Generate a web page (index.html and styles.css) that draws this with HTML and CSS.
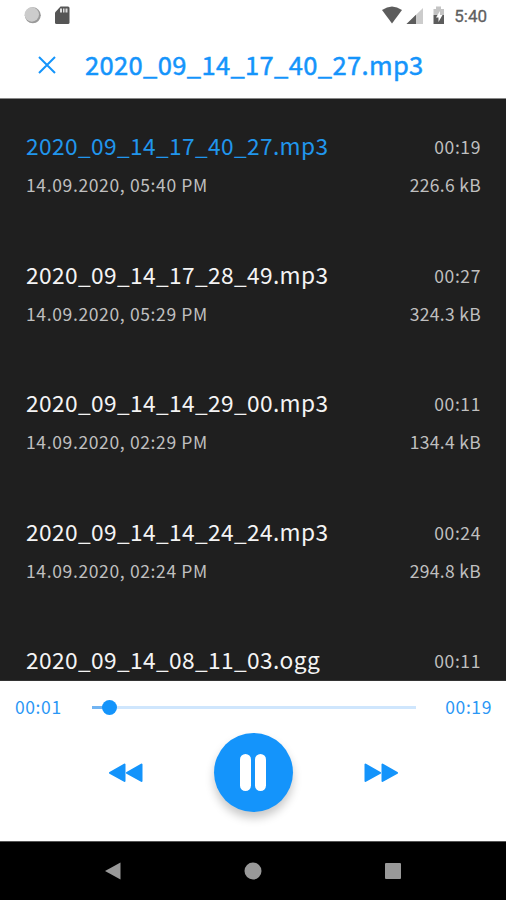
FILE: index.html
```html
<!DOCTYPE html>
<html lang="en">

<head>
    <meta charset="UTF-8" />
    <meta name="viewport" content="width=device-width, initial-scale=1.0" />
    <title>Recordings</title>
    <link rel="stylesheet" href="styles.css">
</head>

<body>
    <div class="phone">
        <div class="status">
            <svg class="status-left" width="50" height="20" viewBox="0 0 50 20">
                <circle cx="9.8" cy="9.3" r="8" fill="#999" />
                <circle cx="8.8" cy="8.5" r="7.2" fill="#ccc" />
                <path d="M32 6.5L37.5.5H45q1.5 0 1.5 1.5v14.5q0 1.5-1.5 1.5H33.5q-1.5 0-1.5-1.5z" fill="#555" />
                <path d="M37 2.5h2v4h-2zM40 2.5h1.5v4H40zM42.5 2.5h2v4h-2z" fill="#ddd" />
            </svg>
            <svg class="status-right" width="64" height="20" viewBox="0 0 64 20">
                <path d="M0 4Q10-3 20 4L10 17.5z" fill="#5c5c5c" />
                <path d="M41 2v16H24.5z" fill="#ccc" />
                <path d="M34 8.8V18h-9.5z" fill="#5c5c5c" />
                <path d="M51.5 3H54V.5h5V3h3v6H51.5z" fill="#c4c4c4" />
                <path d="M51.5 9H62v9H51.5z" fill="#5c5c5c" />
                <path d="M58 5l-4 6.5h2.5V16l4-7H58z" fill="#fff" />
            </svg>
            <span class="clock">5:40</span>
        </div>
        <div class="header">
            <svg class="close" width="18" height="18" viewBox="0 0 18 18">
                <path d="M1 1l16 16M17 1L1 17" stroke="#1494fb" stroke-width="2" />
            </svg>
            <span class="title">2020_09_14_17_40_27.mp3</span>
        </div>
        <div class="list">
            <div class="item active">
                <div class="row"><span class="name">2020_09_14_17_40_27.mp3</span><span class="info">00:19</span></div>
                <div class="row"><span class="info date">14.09.2020, 05:40 PM</span><span class="info size">226.6 kB</span></div>
            </div>
            <div class="item">
                <div class="row"><span class="name">2020_09_14_17_28_49.mp3</span><span class="info">00:27</span></div>
                <div class="row"><span class="info date">14.09.2020, 05:29 PM</span><span class="info size">324.3 kB</span></div>
            </div>
            <div class="item">
                <div class="row"><span class="name">2020_09_14_14_29_00.mp3</span><span class="info">00:11</span></div>
                <div class="row"><span class="info date">14.09.2020, 02:29 PM</span><span class="info size">134.4 kB</span></div>
            </div>
            <div class="item">
                <div class="row"><span class="name">2020_09_14_14_24_24.mp3</span><span class="info">00:24</span></div>
                <div class="row"><span class="info date">14.09.2020, 02:24 PM</span><span class="info size">294.8 kB</span></div>
            </div>
            <div class="item">
                <div class="row"><span class="name">2020_09_14_08_11_03.ogg</span><span class="info">00:11</span></div>
            </div>
        </div>
        <div class="player">
            <div class="progress">
                <span class="time">00:01</span>
                <div class="track">
                    <div class="played"></div>
                    <div class="thumb"></div>
                </div>
                <span class="time">00:19</span>
            </div>
            <div class="controls">
                <svg width="34" height="20" viewBox="0 0 34 20">
                    <path d="M1 9.8L15.5 1.5V18zM18 9.8L32.5 1.5V18z" fill="#1494fb" stroke="#1494fb" stroke-width="2" stroke-linejoin="round" />
                </svg>
                <div class="pause"><i></i><i></i></div>
                <svg width="34" height="20" viewBox="0 0 34 20">
                    <path d="M33 9.8L18.5 1.5V18zM16 9.8L1.5 1.5V18z" fill="#1494fb" stroke="#1494fb" stroke-width="2" stroke-linejoin="round" />
                </svg>
            </div>
        </div>
        <div class="nav">
            <svg width="16" height="18" viewBox="0 0 16 18"><path d="M0 9L15.5.5v17z" fill="#999" /></svg>
            <svg width="18" height="18" viewBox="0 0 18 18"><circle cx="9" cy="9" r="8.5" fill="#999" /></svg>
            <svg width="16" height="16" viewBox="0 0 16 16"><rect width="16" height="16" rx="1" fill="#999" /></svg>
        </div>
    </div>
</body>

</html>
```

FILE: styles.css
```css
* {
    margin: 0;
    padding: 0;
    box-sizing: border-box;
}

body {
    font-family: "Noto Sans CJK JP", "Noto Sans", sans-serif;
    font-kerning: none;
    background: #fff;
}

.phone {
    display: flex;
    flex-direction: column;
    width: 506px;
    height: 900px;
    overflow: hidden;
}

.status {
    display: flex;
    align-items: center;
    height: 32px;
    padding: 0 19px 0 23px;
}

.status-right {
    margin-left: auto;
}

.clock {
    margin-left: 8px;
    font: 400 17px Roboto, sans-serif;
    color: #606060;
    -webkit-text-stroke: 0.3px #606060;
}

.header {
    display: flex;
    align-items: center;
    height: 67px;
    padding: 0 0 1px 38px;
    border-bottom: 1px solid #888;
}

.title {
    margin-left: 29px;
    padding-bottom: 2px;
    font-size: 25.5px;
    line-height: 40px;
    letter-spacing: 0.37px;
    color: #1494fb;
    -webkit-text-stroke: 0.5px #1494fb;
}

.list {
    height: 582px;
    padding: 29px 25px 0 26px;
    background: #1f1f1f;
    border-bottom: 1px solid #333;
    overflow: hidden;
}

.item {
    height: 128.5px;
}

.row {
    display: flex;
    justify-content: space-between;
    align-items: center;
    height: 38px;
}

.name {
    padding-bottom: 2px;
    font-size: 22.7px;
    line-height: 38px;
    letter-spacing: 0.38px;
    color: #f4f4f4;
}

.active .name {
    color: #2196ec;
}

.info {
    font-size: 17.5px;
    line-height: 38px;
    letter-spacing: 0.6px;
    color: #bfbfbf;
}

.date {
    letter-spacing: 0.64px;
}

.size {
    letter-spacing: 0.3px;
}

.player {
    height: 160px;
}

.progress {
    display: flex;
    justify-content: space-between;
    align-items: center;
    height: 52px;
    padding: 0 14px 0 15px;
}

.time {
    font-size: 17.5px;
    line-height: 24px;
    letter-spacing: 0.6px;
    color: #2b97f5;
}

.track {
    position: relative;
    width: 324px;
    height: 3px;
    background: #cfe6fd;
}

.played {
    width: 17px;
    height: 3px;
    background: #72b4f2;
}

.thumb {
    position: absolute;
    left: 10px;
    top: -6px;
    width: 15px;
    height: 15px;
    border-radius: 50%;
    background: #1494fb;
}

.controls {
    display: flex;
    justify-content: center;
    align-items: center;
    gap: 71px;
    height: 79px;
}

.pause {
    display: flex;
    justify-content: center;
    align-items: center;
    gap: 4px;
    width: 79px;
    height: 79px;
    border-radius: 50%;
    background: #1494fb;
    box-shadow: 0 6px 10px rgba(0, 0, 0, .22);
}

.pause i {
    width: 11px;
    height: 37px;
    border-radius: 5.5px;
    background: #fff;
}

.nav {
    display: flex;
    justify-content: space-between;
    align-items: center;
    height: 59px;
    padding: 0 105px;
    background: #000;
    border-top: 1px solid #555;
}
```
